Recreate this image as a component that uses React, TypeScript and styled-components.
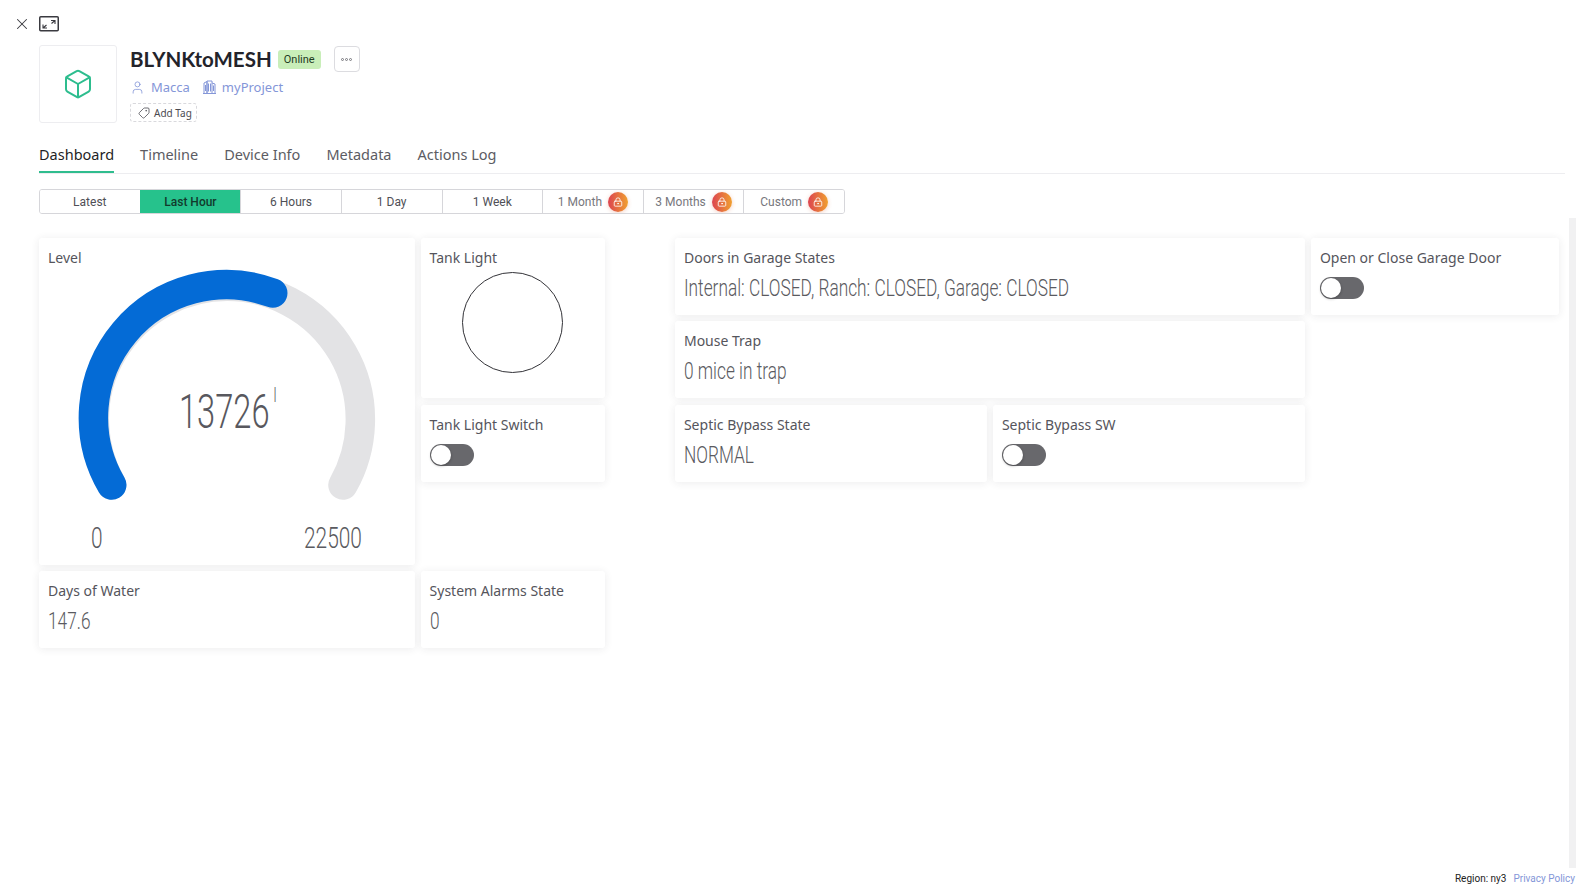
import React from "react";
import styled, { createGlobalStyle } from "styled-components";
import { Box, Tag, User, LockKeyhole, X } from "lucide-react";

const GlobalStyle = createGlobalStyle`
    html, body {
        margin: 0;
        padding: 0;
        background: #fff;
        overflow: hidden;
    }
    body {
        font-family: "Noto Sans", "Open Sans", sans-serif;
        color: #4f4f56;
    }
`;

const Page = styled.div`
    position: relative;
    width: 1578px;
    height: 889px;
    display: flex;
    flex-direction: column;
    background: #fff;
`;

const TopTools = styled.div`
    display: flex;
    align-items: center;
    gap: 8px;
    height: 16px;
    padding: 16px 0 0 13px;
    color: #3a3a40;
`;

const Header = styled.div`
    display: flex;
    gap: 13px;
    margin: 13px 0 0 39px;
`;

const LogoBox = styled.div`
    width: 76px;
    height: 76px;
    border: 1px solid #ededf0;
    border-radius: 3px;
    display: flex;
    align-items: center;
    justify-content: center;
    color: #2dbd8e;
`;

const HeaderInfo = styled.div`
    display: flex;
    flex-direction: column;
`;

const TitleRow = styled.div`
    display: flex;
    align-items: center;
    height: 28px;
    margin-top: 0;
`;

const Title = styled.h1`
    margin: 0;
    font-family: Lato, sans-serif;
    font-size: 20.5px;
    font-weight: 700;
    color: #23232a;
    letter-spacing: 0;
`;

const Status = styled.span`
    margin-left: 6px;
    height: 19px;
    width: 43px;
    background: #c9eeb9;
    border-radius: 3px;
    color: #1f3a1f;
    font-family: Roboto, sans-serif;
    font-size: 11px;
    display: flex;
    align-items: center;
    justify-content: center;
`;

const MoreButton = styled.div`
    margin-left: 13px;
    width: 24px;
    height: 24px;
    border: 1px solid #dcdce0;
    border-radius: 4px;
    display: flex;
    align-items: center;
    justify-content: center;
    gap: 1px;
`;

const MoreDot = styled.i`
    width: 3px;
    height: 3px;
    border-radius: 50%;
    border: 1px solid #77777d;
    box-sizing: border-box;
`;

const OwnerRow = styled.div`
    display: flex;
    align-items: center;
    height: 20px;
    margin-top: 4px;
    color: #8496d8;
    font-size: 13px;
`;

const OwnerLink = styled.span`
    display: flex;
    align-items: center;
    gap: 6px;
    margin-right: 13px;
`;

const AddTag = styled.div`
    display: flex;
    align-items: center;
    gap: 4px;
    box-sizing: border-box;
    width: 67px;
    height: 19px;
    margin-top: 6px;
    padding-left: 7px;
    border: 1px dashed #d9d9dd;
    border-radius: 3px;
    font-size: 10px;
    color: #4a4a50;
`;

const Tabs = styled.div`
    display: flex;
    gap: 26px;
    height: 35px;
    margin: 15px 13px 0 39px;
    border-bottom: 1px solid #ededf0;
`;

const TabItem = styled.div<{ $active?: boolean }>`
    height: 35px;
    line-height: 32px;
    box-sizing: border-box;
    font-size: 14.5px;
    color: ${props => (props.$active ? "#1f1f26" : "#5c5c63")};
    border-bottom: ${props => (props.$active ? "2px solid #2fbd8e" : "none")};
`;

const Ranges = styled.div`
    display: flex;
    width: 806px;
    height: 25px;
    margin: 15px 0 0 39px;
    border: 1px solid #d6d6da;
    border-radius: 3px;
    overflow: hidden;
    box-sizing: border-box;
`;

const RangeItem = styled.div<{ $active?: boolean; $locked?: boolean }>`
    flex: 1;
    display: flex;
    align-items: center;
    justify-content: center;
    gap: 6px;
    font-family: Roboto, sans-serif;
    font-size: 12px;
    font-weight: ${props => (props.$active ? 500 : 400)};
    color: ${props => (props.$active ? "#123a2c" : props.$locked ? "#77777d" : "#4f4f56")};
    background: ${props => (props.$active ? "#26c28c" : "#fff")};
    border-left: 1px solid ${props => (props.$active ? "#26c28c" : "#d6d6da")};
    &:first-child {
        border-left: none;
    }
`;

const LockBadge = styled.span`
    width: 20px;
    height: 20px;
    border-radius: 50%;
    background: linear-gradient(90deg, #dc4450, #f0a030);
    box-shadow: 0 1px 4px rgba(220, 100, 60, 0.3);
    color: #fff;
    display: flex;
    align-items: center;
    justify-content: center;
`;

const Board = styled.div`
    display: grid;
    grid-template-columns: repeat(24, 57.6px);
    grid-auto-rows: 77px;
    gap: 6.3px 6px;
    margin: 24px 0 0 39px;
`;

const Card = styled.div<{ $col: number; $span: number; $row: number; $rows?: number }>`
    grid-column: ${props => props.$col} / span ${props => props.$span};
    grid-row: ${props => props.$row} / span ${props => props.$rows || 1};
    position: relative;
    box-sizing: border-box;
    padding: 10px 9px;
    background: #fff;
    border-radius: 3px;
    box-shadow: 0 1px 8px rgba(40, 40, 60, 0.09);
`;

const CardLabel = styled.div`
    font-size: 14px;
    line-height: 19px;
    color: #55555c;
`;

const ValueText = styled.div`
    margin-top: 6px;
    font-family: Roboto, sans-serif;
    font-weight: 300;
    font-size: 24px;
    line-height: 30px;
    color: #5a5a60;
    transform: scaleX(0.72);
    transform-origin: left center;
    white-space: nowrap;
`;

const Toggle = styled.div`
    position: relative;
    width: 44px;
    height: 22px;
    margin-top: 10px;
    border-radius: 11px;
    background: #68686c;
`;

const ToggleKnob = styled.span`
    position: absolute;
    left: 1px;
    top: 1px;
    width: 20px;
    height: 20px;
    border-radius: 50%;
    background: #fff;
    box-shadow: 0 1px 3px rgba(0, 0, 0, 0.3);
`;

const Lamp = styled.div`
    width: 101px;
    height: 101px;
    margin: 5px auto 0;
    border: 1px solid #333338;
    border-radius: 50%;
    box-sizing: border-box;
`;

const GaugeWrap = styled.div`
    position: absolute;
    left: 0;
    top: 0;
`;

const GaugeValue = styled.div`
    position: absolute;
    left: 140px;
    top: 146px;
    width: 100px;
    display: flex;
    font-family: Roboto, sans-serif;
    font-weight: 300;
    font-size: 48px;
    line-height: 56px;
    color: #58585e;
    transform: scaleX(0.68);
    transform-origin: left top;
`;

const GaugeUnit = styled.sup`
    font-size: 20px;
    line-height: 22px;
    margin-left: 6px;
`;

const GaugeBound = styled.div<{ $left: number }>`
    position: absolute;
    left: ${props => props.$left}px;
    top: 283px;
    font-family: Roboto, sans-serif;
    font-weight: 300;
    font-size: 29px;
    line-height: 34px;
    color: #5a5a60;
    transform: scaleX(0.72);
    transform-origin: left top;
`;

const Scrollbar = styled.div`
    position: absolute;
    left: 1569px;
    top: 218px;
    width: 7px;
    height: 650px;
    background: #f1f1f2;
`;

const Footer = styled.div`
    position: absolute;
    right: 3px;
    bottom: 5px;
    display: flex;
    gap: 7px;
    font-family: Roboto, sans-serif;
    font-size: 10px;
    color: #222;
`;

const FooterLink = styled.span`
    color: #8496d8;
`;

const ExpandIcon = () => (
    <svg width="20" height="16" viewBox="0 0 20 16" fill="none" stroke="#3a3a40">
        <rect x="0.75" y="0.75" width="18.5" height="14" rx="1" strokeWidth="1.5" />
        <path d="M12 4.5h4v3.5M16 4.5l-3.5 3M8 12H4V8.5M4 12l3.5-3" strokeWidth="1.1" />
    </svg>
);

const BuildingIcon = () => (
    <svg width="13" height="14" viewBox="0 0 13 14" fill="none" stroke="#8496d8" strokeWidth="1">
        <path d="M1 13V3l3-1.5V13M4 13V1h5v12M9 3l3 1v9M0 13.5h13M5.5 3.5v8M7.5 3.5v8M2.5 5v6M10.5 5.5v5.5" />
    </svg>
);

const ranges = ["Latest", "Last Hour", "6 Hours", "1 Day", "1 Week", "1 Month", "3 Months", "Custom"];
const lockedRanges = ["1 Month", "3 Months", "Custom"];
const tabs = ["Dashboard", "Timeline", "Device Info", "Metadata", "Actions Log"];

const Gauge = () => (
    <GaugeWrap>
        <svg width="376" height="300" viewBox="0 0 376 300" fill="none" strokeWidth="29.5" strokeLinecap="round">
            <path d="M72.7 247 A133 133 0 1 1 304 247" stroke="#e3e3e5" />
            <path d="M72.7 247 A133 133 0 0 1 233.7 55" stroke="#046bd6" />
        </svg>
    </GaugeWrap>
);

const App = (): JSX.Element => {
    return (
        <Page>
            <GlobalStyle />
            <TopTools>
                <X size={18} strokeWidth={1.4} />
                <ExpandIcon />
            </TopTools>
            <Header>
                <LogoBox>
                    <Box size={32} strokeWidth={1.5} />
                </LogoBox>
                <HeaderInfo>
                    <TitleRow>
                        <Title>BLYNKtoMESH</Title>
                        <Status>Online</Status>
                        <MoreButton>
                            <MoreDot />
                            <MoreDot />
                            <MoreDot />
                        </MoreButton>
                    </TitleRow>
                    <OwnerRow>
                        <OwnerLink>
                            <User size={15} strokeWidth={1.3} />
                            Macca
                        </OwnerLink>
                        <OwnerLink>
                            <BuildingIcon />
                            myProject
                        </OwnerLink>
                    </OwnerRow>
                    <AddTag>
                        <Tag size={12} strokeWidth={1.6} style={{ transform: "scaleX(-1)" }} />
                        Add Tag
                    </AddTag>
                </HeaderInfo>
            </Header>
            <Tabs>
                {tabs.map(tab => (
                    <TabItem key={tab} $active={tab === "Dashboard"}>
                        {tab}
                    </TabItem>
                ))}
            </Tabs>
            <Ranges>
                {ranges.map(range => {
                    const locked = lockedRanges.includes(range);
                    return (
                        <RangeItem key={range} $active={range === "Last Hour"} $locked={locked}>
                            {range}
                            {locked && (
                                <LockBadge>
                                    <LockKeyhole size={10} strokeWidth={2} />
                                </LockBadge>
                            )}
                        </RangeItem>
                    );
                })}
            </Ranges>
            <Board>
                <Card $col={1} $span={6} $row={1} $rows={4}>
                    <CardLabel>Level</CardLabel>
                    <Gauge />
                    <GaugeValue>
                        13726<GaugeUnit>l</GaugeUnit>
                    </GaugeValue>
                    <GaugeBound $left={52}>0</GaugeBound>
                    <GaugeBound $left={265}>22500</GaugeBound>
                </Card>
                <Card $col={7} $span={3} $row={1} $rows={2}>
                    <CardLabel>Tank Light</CardLabel>
                    <Lamp />
                </Card>
                <Card $col={7} $span={3} $row={3}>
                    <CardLabel>Tank Light Switch</CardLabel>
                    <Toggle>
                        <ToggleKnob />
                    </Toggle>
                </Card>
                <Card $col={1} $span={6} $row={5}>
                    <CardLabel>Days of Water</CardLabel>
                    <ValueText>147.6</ValueText>
                </Card>
                <Card $col={7} $span={3} $row={5}>
                    <CardLabel>System Alarms State</CardLabel>
                    <ValueText>0</ValueText>
                </Card>
                <Card $col={11} $span={10} $row={1}>
                    <CardLabel>Doors in Garage States</CardLabel>
                    <ValueText>Internal: CLOSED, Ranch: CLOSED, Garage: CLOSED</ValueText>
                </Card>
                <Card $col={21} $span={4} $row={1}>
                    <CardLabel>Open or Close Garage Door</CardLabel>
                    <Toggle>
                        <ToggleKnob />
                    </Toggle>
                </Card>
                <Card $col={11} $span={10} $row={2}>
                    <CardLabel>Mouse Trap</CardLabel>
                    <ValueText>0 mice in trap</ValueText>
                </Card>
                <Card $col={11} $span={5} $row={3}>
                    <CardLabel>Septic Bypass State</CardLabel>
                    <ValueText>NORMAL</ValueText>
                </Card>
                <Card $col={16} $span={5} $row={3}>
                    <CardLabel>Septic Bypass SW</CardLabel>
                    <Toggle>
                        <ToggleKnob />
                    </Toggle>
                </Card>
            </Board>
            <Scrollbar />
            <Footer>
                <span>Region: ny3</span>
                <FooterLink>Privacy Policy</FooterLink>
            </Footer>
        </Page>
    );
};

export default App;
